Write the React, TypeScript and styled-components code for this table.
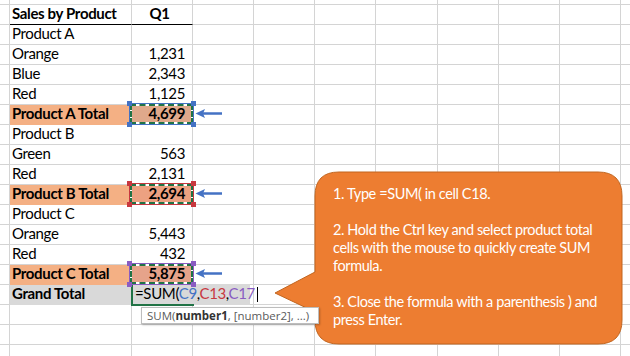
import React from "react";
import styled, { createGlobalStyle } from "styled-components";

const GRID = "#d4d4d4";
const GREEN = "#217346";
const ORANGE = "#f4b084";
const GREY = "#d9d9d9";
// widths include the right gridline
const COLS = [10, 122, 61, 61, 61, 61, 62, 61, 61, 61, 40];

type Kind = "header" | "plain" | "total" | "grand" | "empty";

interface Pick {
  line: string;
  fill: string;
}

interface RowData {
  kind: Kind;
  label?: string;
  value?: string;
  pick?: Pick;
}

const BLUE_PICK: Pick = { line: "#4472c4", fill: "#dfa98b" };
const RED_PICK: Pick = { line: "#c8383f", fill: "#eca181" };
const PURPLE_PICK: Pick = { line: "#8a5cc2", fill: "#e6a38a" };

const rows: RowData[] = [
  { kind: "header", label: "Sales by Product", value: "Q1" },
  { kind: "plain", label: "Product A" },
  { kind: "plain", label: "Orange", value: "1,231" },
  { kind: "plain", label: "Blue", value: "2,343" },
  { kind: "plain", label: "Red", value: "1,125" },
  { kind: "total", label: "Product A Total", value: "4,699", pick: BLUE_PICK },
  { kind: "plain", label: "Product B" },
  { kind: "plain", label: "Green", value: "563" },
  { kind: "plain", label: "Red", value: "2,131" },
  { kind: "total", label: "Product B Total", value: "2,694", pick: RED_PICK },
  { kind: "plain", label: "Product C" },
  { kind: "plain", label: "Orange", value: "5,443" },
  { kind: "plain", label: "Red", value: "432" },
  { kind: "total", label: "Product C Total", value: "5,875", pick: PURPLE_PICK },
  { kind: "grand", label: "Grand Total" },
  { kind: "empty" },
  { kind: "empty" },
  { kind: "empty" },
];

const GlobalStyle = createGlobalStyle`
  html, body {
    margin: 0;
    padding: 0;
    background: #fff;
    overflow: hidden;
  }
  body {
    font-family: Lato, "Open Sans", sans-serif;
  }
`;

const Sheet = styled.div`
  position: relative;
  width: 630px;
  height: 356px;
  overflow: hidden;
  background: #fff;
  font-family: Lato, "Liberation Sans", sans-serif;
  font-size: 15px;
  color: #000;
`;

const Row = styled.div<{ $h: number }>`
  display: flex;
  height: ${(p) => p.$h}px;
`;

const Cell = styled.div<{
  $w: number;
  $fill?: string;
  $bottom?: string;
  $bold?: boolean;
  $align?: "left" | "right" | "center";
}>`
  position: relative;
  flex: 0 0 ${(p) => p.$w}px;
  box-sizing: border-box;
  height: 100%;
  padding: 0 7px 0 2px;
  border-right: 1px solid ${(p) => p.$fill ?? GRID};
  border-bottom: 1px solid ${(p) => p.$bottom ?? p.$fill ?? GRID};
  background: ${(p) => p.$fill ?? "#fff"};
  font-weight: ${(p) => (p.$bold ? 700 : 400)};
  text-align: ${(p) => p.$align ?? "left"};
  line-height: 17px;
  white-space: nowrap;
  letter-spacing: -0.35px;
`;

const Marquee = styled.div<{ $line: string }>`
  position: absolute;
  left: -3px;
  top: -2px;
  right: -2px;
  bottom: -1px;
  border: 1px solid ${(p) => p.$line};
  pointer-events: none;
  z-index: 2;

  &::before,
  &::after {
    content: "";
    position: absolute;
    inset: 0;
  }
  &::before {
    border: 2px solid #fff;
  }
  &::after {
    border: 2px dashed ${GREEN};
  }
`;

const Handle = styled.span<{ $color: string; $x: "left" | "right"; $y: "top" | "bottom" }>`
  position: absolute;
  width: 5px;
  height: 5px;
  background: ${(p) => p.$color};
  ${(p) => p.$x}: -3px;
  ${(p) => p.$y}: -3px;
  z-index: 2;
`;

const Pointer = styled.svg`
  position: absolute;
  left: 63px;
  top: 3px;
  z-index: 2;
`;

const Editor = styled.div`
  position: absolute;
  left: -1px;
  top: -1px;
  width: 119px;
  height: 21px;
  box-sizing: border-box;
  padding: 1px 0 0 2px;
  background: ${GREY};
  border-left: 2px solid ${GREEN};
  line-height: 17px;
  font-weight: 400;
  z-index: 1;
`;

const ActiveEdge = styled.div`
  position: absolute;
  left: -1px;
  bottom: -2px;
  width: 63px;
  height: 2px;
  background: ${GREEN};
  z-index: 2;
`;

const Ref = styled.span<{ $color: string }>`
  color: ${(p) => p.$color};
`;

const Caret = styled.span`
  display: inline-block;
  width: 1px;
  height: 15px;
  margin-left: 2px;
  vertical-align: -3px;
  background: #000;
`;

const Tip = styled.div`
  position: absolute;
  left: 141px;
  top: 307px;
  height: 17px;
  box-sizing: border-box;
  padding: 0 9px 0 5px;
  background: #fff;
  border: 1px solid #bdbdbd;
  box-shadow: 1px 1px 2px rgba(0, 0, 0, 0.25);
  font-family: "Open Sans", sans-serif;
  font-size: 11.5px;
  line-height: 15px;
  color: #5b5b5b;
  white-space: nowrap;
  z-index: 4;

  b {
    color: #333;
  }
`;

const Callout = styled.div`
  position: absolute;
  left: 274px;
  top: 171px;
  width: 350px;
  height: 175px;
  z-index: 3;
`;

const CalloutShape = styled.svg`
  position: absolute;
  left: 0;
  top: 0;
`;

const CalloutText = styled.div`
  position: relative;
  padding: 14px 0 0 59px;
  font-family: Lato, "Open Sans", sans-serif;
  font-size: 14.5px;
  line-height: 18px;
  color: #fff;
  letter-spacing: -0.4px;

  p {
    margin: 0 0 18px;
  }
`;

function LeftArrow() {
  return (
    <Pointer width="28" height="11" viewBox="0 0 28 11">
      <path d="M8 5.5H27" stroke="#4472c4" strokeWidth="2.5" />
      <path d="M0.5 5.5L10 1L8 5.5L10 10Z" fill="#4472c4" />
    </Pointer>
  );
}

function Selection({ pick }: { pick: Pick }) {
  return (
    <>
      <Marquee $line={pick.line}>
        <Handle $color={pick.line} $x="left" $y="top" />
        <Handle $color={pick.line} $x="right" $y="top" />
        <Handle $color={pick.line} $x="left" $y="bottom" />
        <Handle $color={pick.line} $x="right" $y="bottom" />
      </Marquee>
      <LeftArrow />
    </>
  );
}

function SheetRow({ row }: { row: RowData }) {
  const rest = COLS.slice(3).map((w, i) => <Cell key={i} $w={w} />);
  const isTotal = row.kind === "total";
  const isGrand = row.kind === "grand";
  const isHeader = row.kind === "header";

  const labelFill = isTotal ? ORANGE : isGrand ? GREY : undefined;
  const valueFill = isTotal ? row.pick?.fill : isGrand ? GREY : undefined;

  return (
    <Row $h={20}>
      <Cell $w={COLS[0]} />
      <Cell
        $w={COLS[1]}
        $fill={labelFill}
        $bottom={isHeader ? "#000" : undefined}
        $bold={isHeader || isTotal || isGrand}
      >
        {row.label}
      </Cell>
      <Cell
        $w={COLS[2]}
        $fill={valueFill}
        $bottom={isHeader ? "#000" : undefined}
        $bold={isHeader || isTotal}
        $align={isHeader ? "center" : "right"}
      >
        {row.value}
        {row.pick && <Selection pick={row.pick} />}
        {isGrand && (
          <>
            <Editor>
              =SUM(<Ref $color={BLUE_PICK.line}>C9</Ref>,
              <Ref $color={RED_PICK.line}>C13</Ref>,
              <Ref $color={PURPLE_PICK.line}>C17</Ref>
              <Caret />
            </Editor>
            <ActiveEdge />
          </>
        )}
      </Cell>
      {rest}
    </Row>
  );
}

export default function App() {
  return (
    <>
      <GlobalStyle />
      <Sheet>
        <Row $h={5}>
          {COLS.map((w, i) => (
            <Cell key={i} $w={w} />
          ))}
        </Row>
        {rows.map((r, i) => (
          <SheetRow key={i} row={r} />
        ))}

        <Tip>
          SUM(<b>number1</b>, [number2], ...)
        </Tip>

        <Callout>
          <CalloutShape width="350" height="175" viewBox="0 0 350 175">
            <path
              d="M65 1H324Q348 1 348 25V149Q348 173 324 173H65Q41 173 41 149V141L1 122L41 101V25Q41 1 65 1Z"
              fill="#ed7d31"
              stroke="#c1651f"
              strokeWidth="1"
            />
          </CalloutShape>
          <CalloutText>
            <p>1. Type =SUM( in cell C18.</p>
            <p>
              2. Hold the Ctrl key and select product total
              <br />
              cells with the mouse to quickly create SUM
              <br />
              formula.
            </p>
            <p>
              3. Close the formula with a parenthesis ) and
              <br />
              press Enter.
            </p>
          </CalloutText>
        </Callout>
      </Sheet>
    </>
  );
}
